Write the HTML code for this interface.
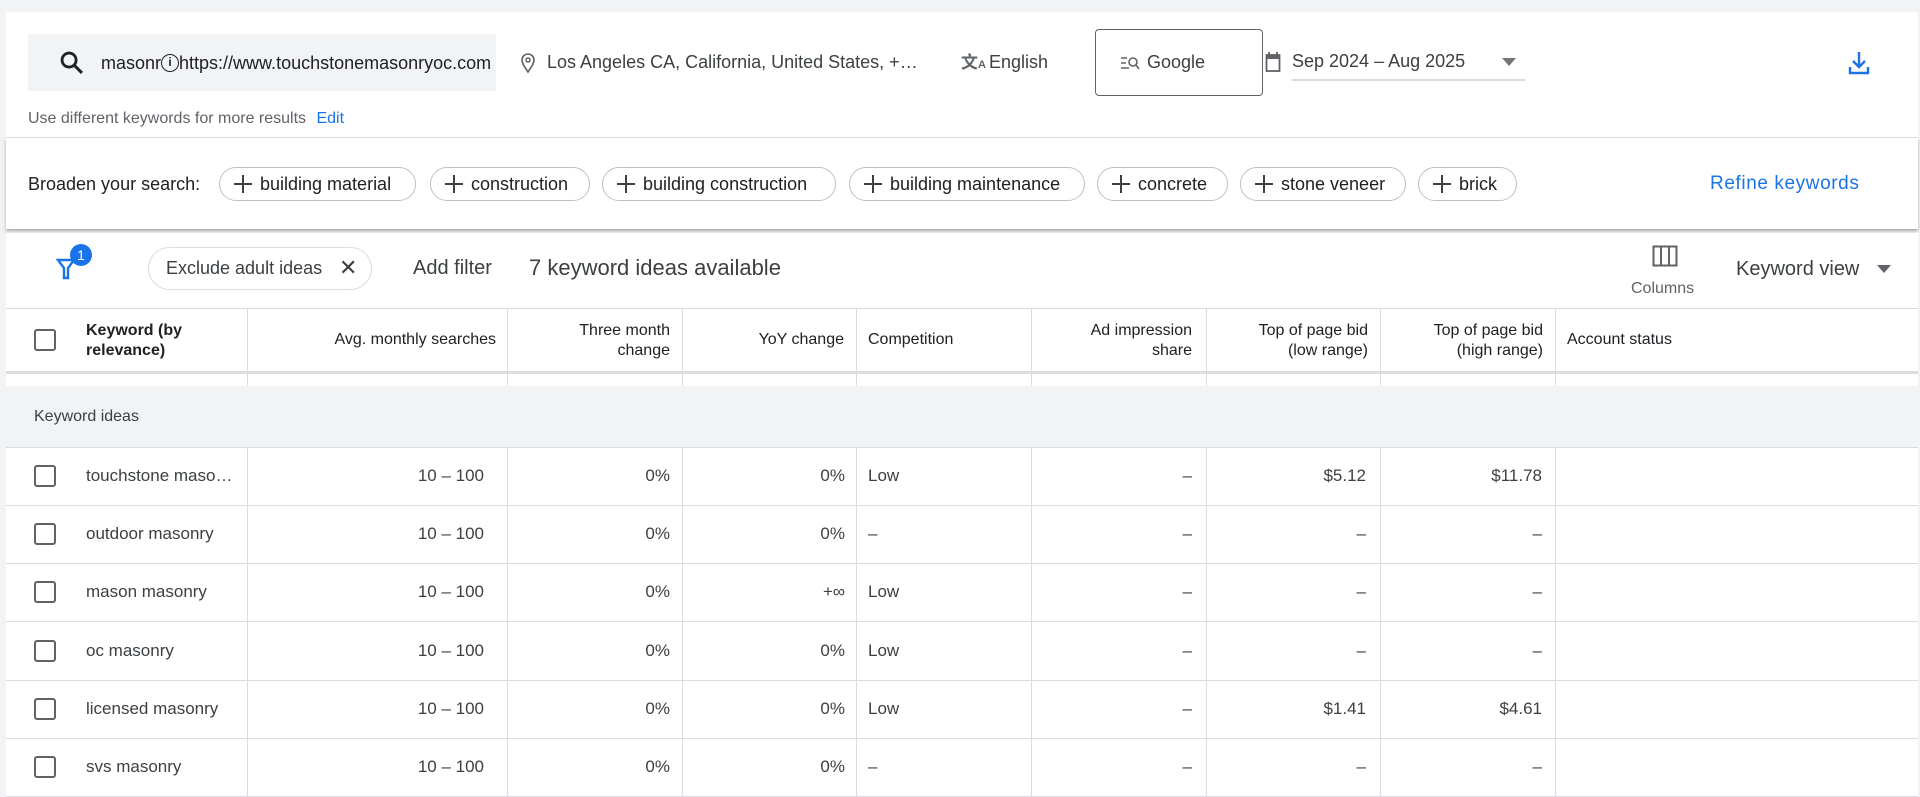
<!DOCTYPE html>
<html><head><meta charset="utf-8"><style>
*{margin:0;padding:0;box-sizing:border-box}
body{width:1920px;height:797px;background:#f1f3f4;font-family:"Liberation Sans",Arial,sans-serif;color:#3c4043;position:relative;overflow:hidden}
.a{position:absolute;white-space:nowrap}
.panel{position:absolute;left:6px;right:2px;background:#fff}
.chip{position:absolute;top:167px;height:34px;border:1px solid #bdc1c6;border-radius:17px;font-size:18px;color:#202124;line-height:32px;padding-left:40px}
.chip:before,.chip:after{content:"";position:absolute;background:#3c4043}
.chip:before{left:14px;top:15px;width:18px;height:2px}
.chip:after{left:22px;top:7px;width:2px;height:18px}
.cb{position:absolute;left:34px;width:22px;height:22px;border:2px solid #5f6368;border-radius:3px}
.vl{position:absolute;width:1px;background:#dadce0}
.hl{position:absolute;left:6px;right:2px;height:1px;background:#dadce0}
.hd{position:absolute;font-size:16px;color:#202124;line-height:20px}
.c{position:absolute;font-size:17px;color:#3c4043;line-height:20px}
.r{text-align:right}
</style></head><body>
<div class="panel" style="top:12px;height:125px"></div>
<div class="panel" style="top:138px;height:91px;box-shadow:0 2px 3px rgba(0,0,0,.3)"></div>
<div class="panel" style="top:233px;height:564px"></div>

<!-- search box -->
<div class="a" style="left:28px;top:34px;width:468px;height:57px;background:#f1f3f4"></div>
<svg class="a" style="left:58px;top:49px" width="28" height="28" viewBox="0 0 24 24"><circle cx="9.5" cy="9.5" r="6" fill="none" stroke="#202124" stroke-width="2.4"/><path d="M14 14l6.5 6.5" stroke="#202124" stroke-width="2.6"/></svg>
<div class="a" style="left:101px;top:52px;font-size:18px;line-height:22px;color:#202124;width:394px;overflow:hidden">masonr<span style="display:inline-block;width:18px;height:18px;border:1.6px solid #202124;border-radius:50%;font-size:12px;text-align:center;line-height:15px;font-weight:bold;vertical-align:top;margin-top:2px">i</span>https://www.touchstonemasonryoc.com</div>
<div class="a" style="left:28px;top:110px;font-size:16px;color:#5f6368">Use different keywords for more results <span style="color:#1a73e8;margin-left:6px">Edit</span></div>

<svg class="a" style="left:520px;top:52px" width="16" height="22" viewBox="0 0 16 22"><path d="M8 20C4 14 2 11 2 8a6 6 0 0112 0c0 3-2 6-6 12z" fill="none" stroke="#5f6368" stroke-width="1.6"/><circle cx="8" cy="8" r="2" fill="none" stroke="#5f6368" stroke-width="1.5"/></svg>
<div class="a" style="left:547px;top:52px;font-size:18px;color:#3c4043">Los Angeles CA, California, United States, +…</div>
<div class="a" style="left:961px;top:50px;font-size:17px;color:#5f6368;font-weight:bold;font-family:'Noto Sans CJK SC',sans-serif;line-height:22px">文<span style="font-size:11px;font-family:'Liberation Sans'">A</span></div>
<div class="a" style="left:989px;top:52px;font-size:18px;color:#3c4043">English</div>
<div class="a" style="left:1095px;top:29px;width:168px;height:67px;border:1px solid #5f6368;border-radius:4px"></div>
<svg class="a" style="left:1120px;top:55px" width="20" height="16" viewBox="0 0 20 16"><path d="M1 3h6M1 8h5M1 13h8" stroke="#5f6368" stroke-width="1.6"/><circle cx="13" cy="7" r="4" fill="none" stroke="#5f6368" stroke-width="1.6"/><path d="M16 10l3 4" stroke="#5f6368" stroke-width="1.6"/></svg>
<div class="a" style="left:1147px;top:52px;font-size:18px;color:#3c4043">Google</div>
<svg class="a" style="left:1265px;top:51px" width="16" height="22" viewBox="0 0 16 22"><rect x="1.5" y="4" width="13" height="16" fill="none" stroke="#5f6368" stroke-width="1.8"/><path d="M1.5 4h13v4h-13z" fill="#5f6368"/><path d="M4 1v4M12 1v4" stroke="#5f6368" stroke-width="1.8"/></svg>
<div class="a" style="left:1292px;top:51px;font-size:18px;color:#3c4043">Sep 2024 – Aug 2025</div>
<div class="a" style="left:1502px;top:58px;width:0;height:0;border-left:7px solid transparent;border-right:7px solid transparent;border-top:8px solid #757575"></div>
<div class="a" style="left:1292px;top:79px;width:233px;height:2px;background:#dadce0"></div>
<svg class="a" style="left:1847px;top:50px" width="24" height="26" viewBox="0 0 24 26"><path d="M12 2v14M6 11l6 6 6-6" fill="none" stroke="#1a73e8" stroke-width="2.4"/><path d="M3 17v6h18v-6" fill="none" stroke="#1a73e8" stroke-width="2.4"/></svg>

<div class="hl" style="top:137px"></div>
<div class="a" style="left:28px;top:174px;font-size:18px;color:#202124">Broaden your search:</div>
<div class="chip" style="left:219px;width:197px">building material</div>
<div class="chip" style="left:430px;width:160px">construction</div>
<div class="chip" style="left:602px;width:234px">building construction</div>
<div class="chip" style="left:849px;width:236px">building maintenance</div>
<div class="chip" style="left:1097px;width:131px">concrete</div>
<div class="chip" style="left:1240px;width:166px">stone veneer</div>
<div class="chip" style="left:1418px;width:99px">brick</div>
<div class="a" style="left:1710px;top:173px;font-size:19px;color:#1a73e8;letter-spacing:0.6px">Refine keywords</div>

<!-- toolbar -->
<svg class="a" style="left:56px;top:256px" width="22" height="26" viewBox="0 0 22 26"><path d="M2 4h16l-6 8v10h-4v-10z" fill="none" stroke="#1a73e8" stroke-width="2.4"/></svg>
<div class="a" style="left:70px;top:244px;width:22px;height:22px;border-radius:50%;background:#1a73e8;color:#fff;font-size:14px;text-align:center;line-height:22px">1</div>
<div class="a" style="left:148px;top:247px;width:224px;height:43px;border:1px solid #dadce0;border-radius:22px"></div>
<div class="a" style="left:166px;top:258px;font-size:18px;color:#3c4043">Exclude adult ideas</div>
<div class="a" style="left:339px;top:255px;font-size:22px;color:#3c4043">✕</div>
<div class="a" style="left:413px;top:257px;font-size:20px;color:#3c4043">Add filter</div>
<div class="a" style="left:529px;top:255px;font-size:22px;color:#3c4043">7 keyword ideas available</div>
<svg class="a" style="left:1652px;top:245px" width="26" height="22" viewBox="0 0 26 22"><rect x="1.5" y="1.5" width="23" height="19" fill="none" stroke="#5f6368" stroke-width="2"/><path d="M9 2v18M17 2v18" stroke="#5f6368" stroke-width="2"/></svg>
<div class="a" style="left:1631px;top:280px;font-size:16px;color:#5f6368">Columns</div>
<div class="a" style="left:1736px;top:258px;font-size:20px;color:#3c4043">Keyword view</div>
<div class="a" style="left:1877px;top:265px;width:0;height:0;border-left:7px solid transparent;border-right:7px solid transparent;border-top:8px solid #5f6368"></div>

<!-- header -->
<div class="hl" style="top:308px"></div>
<div class="cb" style="top:329px"></div>
<div class="hd" style="left:86px;top:321px;font-weight:bold">Keyword (by<br>relevance)</div>
<div class="hd r" style="left:260px;width:236px;top:330px">Avg. monthly searches</div>
<div class="hd r" style="left:520px;width:150px;top:321px">Three month<br>change</div>
<div class="hd r" style="left:690px;width:154px;top:330px">YoY change</div>
<div class="hd" style="left:868px;top:330px">Competition</div>
<div class="hd r" style="left:1040px;width:152px;top:321px">Ad impression<br>share</div>
<div class="hd r" style="left:1215px;width:153px;top:321px">Top of page bid<br>(low range)</div>
<div class="hd r" style="left:1390px;width:153px;top:321px">Top of page bid<br>(high range)</div>
<div class="hd" style="left:1567px;top:330px">Account status</div>
<div class="a" style="left:6px;right:2px;top:371px;height:18px;background:#f1f3f4;border-top:3px solid #dadce0"></div>
<div class="a" style="left:6px;right:2px;top:374px;height:12px;background:#fff"></div>
<div class="a" style="left:6px;right:2px;top:386px;height:61px;background:#f1f3f4"></div>
<div class="a" style="left:34px;top:408px;font-size:16px;color:#3c4043">Keyword ideas</div>

<div class="vl" style="left:247px;top:309px;height:77px"></div>
<div class="vl" style="left:507px;top:309px;height:77px"></div>
<div class="vl" style="left:682px;top:309px;height:77px"></div>
<div class="vl" style="left:856px;top:309px;height:77px"></div>
<div class="vl" style="left:1031px;top:309px;height:77px"></div>
<div class="vl" style="left:1206px;top:309px;height:77px"></div>
<div class="vl" style="left:1380px;top:309px;height:77px"></div>
<div class="vl" style="left:1555px;top:309px;height:77px"></div>
<div class="vl" style="left:247px;top:447px;height:350px"></div>
<div class="vl" style="left:507px;top:447px;height:350px"></div>
<div class="vl" style="left:682px;top:447px;height:350px"></div>
<div class="vl" style="left:856px;top:447px;height:350px"></div>
<div class="vl" style="left:1031px;top:447px;height:350px"></div>
<div class="vl" style="left:1206px;top:447px;height:350px"></div>
<div class="vl" style="left:1380px;top:447px;height:350px"></div>
<div class="vl" style="left:1555px;top:447px;height:350px"></div>

<div class="hl" style="top:447px"></div>
<div class="hl" style="top:505px"></div>
<div class="hl" style="top:563px"></div>
<div class="hl" style="top:621px"></div>
<div class="hl" style="top:680px"></div>
<div class="hl" style="top:738px"></div>
<div class="hl" style="top:796px"></div>

<div class="cb" style="top:465px"></div><div class="c" style="left:86px;top:466px">touchstone maso…</div><div class="c r" style="left:300px;width:184px;top:466px">10 – 100</div><div class="c r" style="left:560px;width:110px;top:466px">0%</div><div class="c r" style="left:735px;width:110px;top:466px">0%</div><div class="c" style="left:868px;top:466px">Low</div><div class="c r" style="left:1100px;width:92px;top:466px">–</div><div class="c r" style="left:1260px;width:106px;top:466px">$5.12</div><div class="c r" style="left:1430px;width:112px;top:466px">$11.78</div>
<div class="cb" style="top:523px"></div><div class="c" style="left:86px;top:524px">outdoor masonry</div><div class="c r" style="left:300px;width:184px;top:524px">10 – 100</div><div class="c r" style="left:560px;width:110px;top:524px">0%</div><div class="c r" style="left:735px;width:110px;top:524px">0%</div><div class="c" style="left:868px;top:524px">–</div><div class="c r" style="left:1100px;width:92px;top:524px">–</div><div class="c r" style="left:1260px;width:106px;top:524px">–</div><div class="c r" style="left:1430px;width:112px;top:524px">–</div>
<div class="cb" style="top:581px"></div><div class="c" style="left:86px;top:582px">mason masonry</div><div class="c r" style="left:300px;width:184px;top:582px">10 – 100</div><div class="c r" style="left:560px;width:110px;top:582px">0%</div><div class="c r" style="left:735px;width:110px;top:582px">+∞</div><div class="c" style="left:868px;top:582px">Low</div><div class="c r" style="left:1100px;width:92px;top:582px">–</div><div class="c r" style="left:1260px;width:106px;top:582px">–</div><div class="c r" style="left:1430px;width:112px;top:582px">–</div>
<div class="cb" style="top:640px"></div><div class="c" style="left:86px;top:641px">oc masonry</div><div class="c r" style="left:300px;width:184px;top:641px">10 – 100</div><div class="c r" style="left:560px;width:110px;top:641px">0%</div><div class="c r" style="left:735px;width:110px;top:641px">0%</div><div class="c" style="left:868px;top:641px">Low</div><div class="c r" style="left:1100px;width:92px;top:641px">–</div><div class="c r" style="left:1260px;width:106px;top:641px">–</div><div class="c r" style="left:1430px;width:112px;top:641px">–</div>
<div class="cb" style="top:698px"></div><div class="c" style="left:86px;top:699px">licensed masonry</div><div class="c r" style="left:300px;width:184px;top:699px">10 – 100</div><div class="c r" style="left:560px;width:110px;top:699px">0%</div><div class="c r" style="left:735px;width:110px;top:699px">0%</div><div class="c" style="left:868px;top:699px">Low</div><div class="c r" style="left:1100px;width:92px;top:699px">–</div><div class="c r" style="left:1260px;width:106px;top:699px">$1.41</div><div class="c r" style="left:1430px;width:112px;top:699px">$4.61</div>
<div class="cb" style="top:756px"></div><div class="c" style="left:86px;top:757px">svs masonry</div><div class="c r" style="left:300px;width:184px;top:757px">10 – 100</div><div class="c r" style="left:560px;width:110px;top:757px">0%</div><div class="c r" style="left:735px;width:110px;top:757px">0%</div><div class="c" style="left:868px;top:757px">–</div><div class="c r" style="left:1100px;width:92px;top:757px">–</div><div class="c r" style="left:1260px;width:106px;top:757px">–</div><div class="c r" style="left:1430px;width:112px;top:757px">–</div>
</body></html>
